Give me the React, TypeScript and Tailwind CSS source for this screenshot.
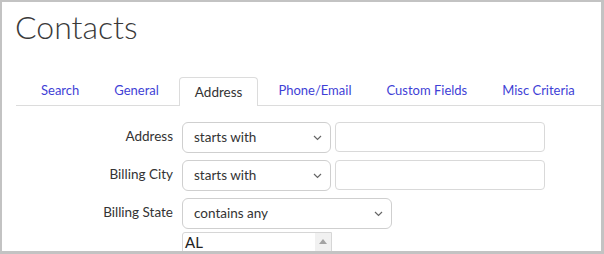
const tabs = ["Search", "General", "Address", "Phone/Email", "Custom Fields", "Misc Criteria"]

function Chevron() {
    return (
        <svg width="9" height="6" viewBox="0 0 9 6" className="shrink-0">
            <path d="M1 1l3.5 3.5L8 1" fill="none" stroke="#666" strokeWidth="1.2" />
        </svg>
    )
}

function SelectBox({ value, width }: { value: string, width: string }) {
    return (
        <div className={`${width} h-[31px] border border-[#cfcfcf] rounded-[6px] flex items-center justify-between pl-[11px] pr-[8px] text-[13.5px] text-[#333] bg-white`}>
            <span>{value}</span>
            <Chevron />
        </div>
    )
}

function TextBox() {
    return <div className="w-[210px] h-[30px] border border-[#d9d9d9] rounded-[4px] bg-white"></div>
}

function Row({ label, children }: { label: string, children: React.ReactNode }) {
    return (
        <div className="flex items-start">
            <div className="ml-[14px] w-[158px] text-right text-[13.5px] text-[#333] pt-[4px] pr-[1px]">{label}</div>
            <div className="ml-[8px] flex items-start gap-[4px]">{children}</div>
        </div>
    )
}

export default function App() {
    return (
        <div className="w-[604px] h-[254px] overflow-hidden bg-white border-t-2 border-l-2 border-r-[3px] border-b-[3px] border-[#c3c3c3]" style={{ fontFamily: "Lato, 'Open Sans', sans-serif" }}>
            <h1 className="pl-[13px] pt-[5px] text-[32px] leading-[40px] text-[#3a3a3a] font-light">Contacts</h1>

            <div className="mt-[30px] ml-[14px] border-b border-[#dcdcdc] flex items-end pl-[10px] gap-[5px] h-[29px]">
                {tabs.map((t) => (
                    t === "Address" ? (
                        <div key={t} className="h-[29px] -mb-px px-[15px] flex items-center border border-b-0 border-[#dcdcdc] rounded-t-[4px] bg-white text-[13.5px] text-[#333]">
                            {t}
                        </div>
                    ) : (
                        <div key={t} className="h-[28px] px-[15px] flex items-center text-[13px] text-[#3f3fd6]">
                            {t}
                        </div>
                    )
                ))}
            </div>

            <div className="mt-[16px] flex flex-col gap-[7px]">
                <Row label="Address">
                    <SelectBox value="starts with" width="w-[149px]" />
                    <TextBox />
                </Row>
                <Row label="Billing City">
                    <SelectBox value="starts with" width="w-[149px]" />
                    <TextBox />
                </Row>
                <Row label="Billing State">
                    <div className="flex flex-col gap-[3px]">
                        <SelectBox value="contains any" width="w-[210px]" />
                        <div className="w-[150px] h-[30px] border border-[#d6d6d6] rounded-tl-[3px] flex">
                            <div className="flex-1 pl-[2px] text-[15px] leading-[18px] text-[#222]">AL</div>
                            <div className="w-[16px] bg-[#f1f1f1] flex justify-center pt-[6px]">
                                <svg width="8" height="5" viewBox="0 0 8 5">
                                    <path d="M0 5L4 0L8 5Z" fill="#a3a3a3" />
                                </svg>
                            </div>
                        </div>
                    </div>
                </Row>
            </div>
        </div>
    )
}
